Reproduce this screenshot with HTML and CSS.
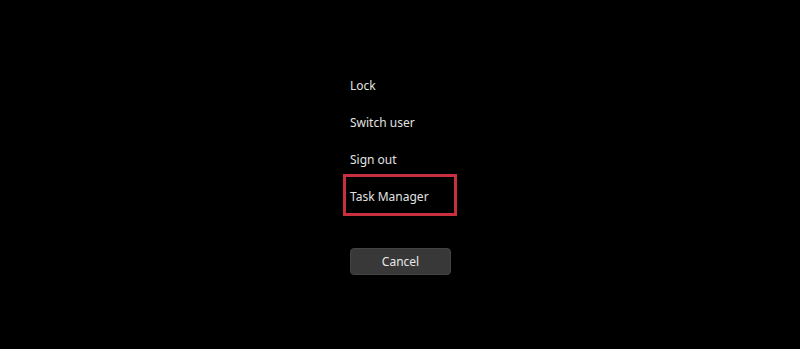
FILE: index.html
```html
<!DOCTYPE html>
<html lang="en">
<head>
    <meta charset="UTF-8">
    <meta name="viewport" content="width=device-width, initial-scale=1.0">
    <title>Security options</title>
    <link rel="stylesheet" href="styles.css">
</head>
<body>
    <div class="options">
        <a href="#" class="option">Lock</a>
        <a href="#" class="option">Switch user</a>
        <a href="#" class="option">Sign out</a>
        <a href="#" class="option highlighted">Task Manager</a>
        <button class="cancel">Cancel</button>
    </div>
</body>
</html>
```

FILE: styles.css
```css
body {
    margin: 0;
    height: 349px;
    background-color: #000;
    font-family: "Noto Sans", "Open Sans", sans-serif;
    color: #e2e2e2;
    overflow: hidden;
}

.options {
    display: flex;
    flex-direction: column;
    align-items: flex-start;
    padding: 67px 0 0 350px;
}

.option {
    display: block;
    height: 37px;
    line-height: 37px;
    font-size: 12px;
    color: #e2e2e2;
    text-decoration: none;
    position: relative;
}

.highlighted::after {
    content: '';
    position: absolute;
    left: -7px;
    top: -4px;
    width: 108px;
    height: 36px;
    border: 3px solid #c9303d;
}

.cancel {
    margin-top: 33px;
    width: 101px;
    height: 27px;
    background-color: #383838;
    border: 1px solid #444;
    border-radius: 4px;
    color: #e8e8e8;
    font-family: inherit;
    font-size: 12px;
    padding: 0;
}
```
